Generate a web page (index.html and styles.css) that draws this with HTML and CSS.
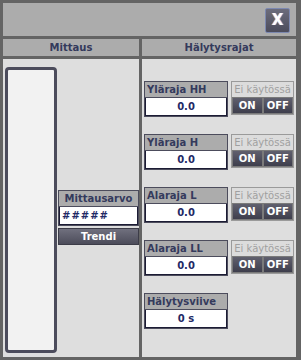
FILE: index.html
```html
<!DOCTYPE html>
<html lang="fi">
<head>
	<meta charset="UTF-8">
	<title>Hälytysrajat</title>
	<link rel="stylesheet" href="styles.css">
</head>
<body>
	<div class="window">
		<div class="titlebar">
			<span class="closebtn">X</span>
		</div>

		<div class="columns">
			<div class="colhead">Mittaus</div>
			<div class="colhead">Hälytysrajat</div>

			<div class="col left">
				<div class="bar"></div>
				<div class="measure">
					<div class="field">
						<div class="fieldhead center">Mittausarvo</div>
						<div class="fieldval leftval">#####</div>
					</div>
					<span class="trendbtn">Trendi</span>
				</div>
			</div>

			<div class="col right">
				<div class="limit">
					<div class="field">
						<div class="fieldhead">Yläraja HH</div>
						<div class="fieldval">0.0</div>
					</div>
					<div class="toggle">
						<div class="togglelabel">Ei käytössä</div>
						<div class="togglebtns"><span>ON</span><span>OFF</span></div>
					</div>
				</div>
				<div class="limit">
					<div class="field">
						<div class="fieldhead">Yläraja H</div>
						<div class="fieldval">0.0</div>
					</div>
					<div class="toggle">
						<div class="togglelabel">Ei käytössä</div>
						<div class="togglebtns"><span>ON</span><span>OFF</span></div>
					</div>
				</div>
				<div class="limit">
					<div class="field">
						<div class="fieldhead">Alaraja L</div>
						<div class="fieldval">0.0</div>
					</div>
					<div class="toggle">
						<div class="togglelabel">Ei käytössä</div>
						<div class="togglebtns"><span>ON</span><span>OFF</span></div>
					</div>
				</div>
				<div class="limit">
					<div class="field">
						<div class="fieldhead">Alaraja LL</div>
						<div class="fieldval">0.0</div>
					</div>
					<div class="toggle">
						<div class="togglelabel">Ei käytössä</div>
						<div class="togglebtns"><span>ON</span><span>OFF</span></div>
					</div>
				</div>
				<div class="limit">
					<div class="field">
						<div class="fieldhead">Hälytysviive</div>
						<div class="fieldval">0 s</div>
					</div>
				</div>
			</div>
		</div>
	</div>
</body>
</html>
```

FILE: styles.css
```css
*{
	margin: 0;
	padding: 0;
	box-sizing: border-box;
}

body{
	font-family: "DejaVu Sans", Verdana, sans-serif;
	font-size: 10px;
	background: #646464;
}

.window{
	width: 301px;
	height: 360px;
	background: #646464;
	padding: 3px 5px 3px 3px;
	display: flex;
	flex-direction: column;
}

/* title bar with close button */
.titlebar{
	height: 33px;
	background: #acacac;
	display: flex;
	justify-content: flex-end;
	align-items: flex-start;
	padding: 5px 6px 0 0;
}

.closebtn{
	width: 25px;
	height: 25px;
	border: 1px solid #7c88b0;
	border-radius: 2px;
	background: linear-gradient(#6c6c7c, #4c4c5c);
	color: #fff;
	font-weight: bold;
	font-size: 15px;
	line-height: 23px;
	text-align: center;
	text-shadow: 1px 0 0 #6d8fd0, -1px 0 0 #c98a5a;
}

.columns{
	flex: 1;
	margin-top: 3px;
	display: grid;
	grid-template-columns: 136px 154px;
	grid-template-rows: 17px 1fr;
	gap: 3px;
}

.colhead{
	background: #acacac;
	color: #343a5c;
	font-weight: bold;
	text-align: center;
	line-height: 17px;
}

.col{
	background: #dedede;
}

.col.left{
	display: flex;
	padding: 8px 0 4px 2px;
	gap: 1px;
}

.bar{
	width: 52px;
	border: 3px solid #4c4c5c;
	border-radius: 4px;
	background: #f2f2f2;
}

.measure{
	margin-top: 123px;
	flex: 1;
}

/* label + value boxes */
.field{
	width: 84px;
	border: 1px solid #4c4c5c;
}

.measure .field{
	width: 81px;
}

.fieldhead{
	height: 16px;
	background: #acacac;
	color: #343a5c;
	font-weight: bold;
	line-height: 16px;
	padding-left: 2px;
	border-bottom: 1px solid #4c4c5c;
}

.fieldhead.center{
	text-align: center;
	padding-left: 0;
}

.fieldval{
	height: 18px;
	background: #fff;
	border: 1px solid #1c1c34;
	border-top: 0;
	color: #1f2a66;
	font-weight: bold;
	line-height: 18px;
	text-align: center;
}

.fieldval.leftval{
	text-align: left;
	padding-left: 2px;
	letter-spacing: 1px;
}

.trendbtn{
	display: block;
	width: 81px;
	height: 17px;
	margin-top: 2px;
	border: 1px solid #3c3c48;
	background: linear-gradient(#70707e, #4c4c5a);
	color: #fff;
	font-weight: bold;
	text-align: center;
	line-height: 15px;
}

.col.right{
	padding: 22px 2px 0 2px;
	display: flex;
	flex-direction: column;
	gap: 17px;
}

.limit{
	display: flex;
	gap: 3px;
	height: 36px;
}

/* disabled toggle */
.toggle{
	width: 63px;
	height: 34px;
	border: 1px solid #9a9a9a;
	background: #7a7a7a;
}

.togglelabel{
	height: 15px;
	background: #dcdcdc;
	color: #a0a0a0;
	text-align: center;
	line-height: 15px;
	font-size: 10px;
}

.togglebtns{
	display: flex;
	gap: 2px;
	padding: 1px;
}

.togglebtns span{
	flex: 1;
	height: 15px;
	background: linear-gradient(#60606e, #3e3e4c);
	color: #fff;
	font-weight: bold;
	text-align: center;
	line-height: 15px;
}
```
